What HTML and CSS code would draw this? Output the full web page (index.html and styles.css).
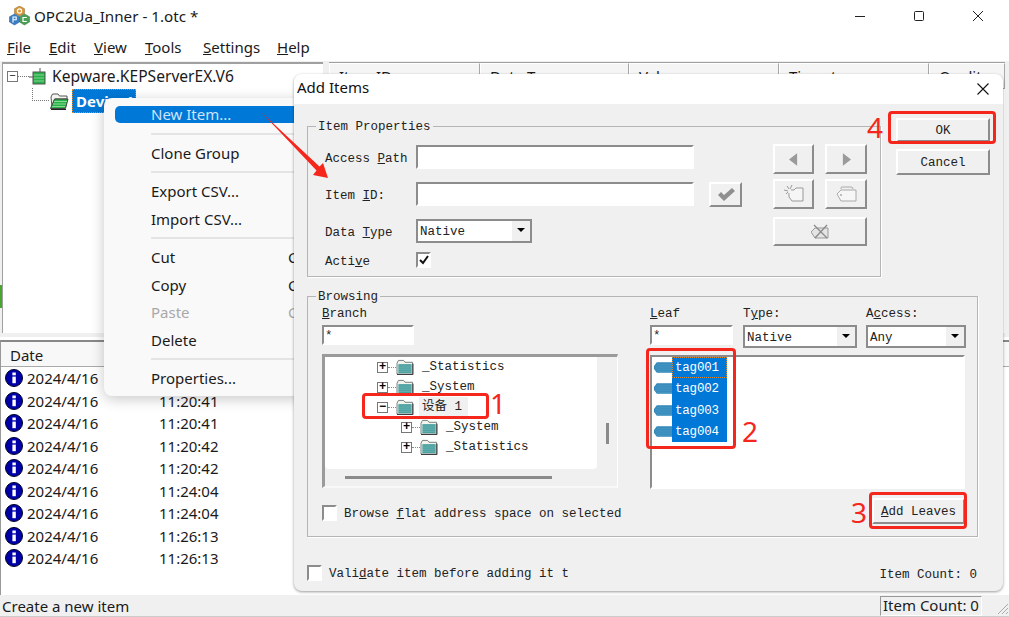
FILE: index.html
```html
<!DOCTYPE html>
<html lang="en">
<head>
<meta charset="utf-8">
<title>OPC2Ua_Inner - 1.otc *</title>
<link rel="stylesheet" href="styles.css">
</head>
<body>
<svg class="defs" width="0" height="0" aria-hidden="true">
  <symbol id="folder" viewBox="0 0 19 17">
    <path d="M1 4.5 L2.5 1.5 H8 L9.5 3.5 H17.5 V16 H1 Z" fill="#f4f4ee" stroke="#6f7a76"/>
    <rect x="2.5" y="5.5" width="14" height="9.5" fill="#3f9c9c"/>
    <path d="M2.5 7.5h14M2.5 9.5h14M2.5 11.5h14M2.5 13.5h14" stroke="#86bfbd" stroke-width=".7"/>
    <path d="M1 16.5H18V5" fill="none" stroke="#333"/>
  </symbol>
  <symbol id="folder-open" viewBox="0 0 20 18">
    <path d="M2 5 L3.5 2 H9 L10.5 4 H18 V7 H6 L3 15 Z" fill="#f4f4ee" stroke="#555"/>
    <path d="M5.5 7 H19 L16.5 16.5 H1.5 Z" fill="#26b246" stroke="#444"/>
    <path d="M5 9.5h13M4 12h13M3 14.5h13" stroke="#a3e4ab" stroke-width=".8"/>
    <path d="M2 17.5H17" stroke="#222"/>
  </symbol>
  <symbol id="info" viewBox="0 0 18 18">
    <circle cx="9" cy="9" r="8.5" fill="#0000a8" stroke="#000020"/>
    <rect x="7.4" y="7.6" width="3.4" height="6.6" fill="#fff"/>
    <rect x="7.4" y="3.5" width="3.4" height="2.8" fill="#fff"/>
  </symbol>
  <symbol id="tag" viewBox="0 0 19 13">
    <path d="M0 5 L3 1 H19 V12 H3 L0 8 Z" fill="#2f86b8"/>
    <path d="M3 3h16M1 5h18M1 7h18M1 9h18M3 11h16" stroke="#5aa5cc" stroke-width=".7"/>
  </symbol>
</svg>

<div class="window">
  <header class="titlebar">
    <svg class="logo" viewBox="0 0 21 20" width="21" height="20" aria-hidden="true">
      <path d="M10.5 0 L15.5 2.7 V7.5 L10.5 10 L5.5 7.5 V2.7 Z" fill="#d8963a" stroke="#8a6a30" stroke-width=".5"/>
      <circle cx="10.5" cy="5" r="2.1" fill="none" stroke="#fff" stroke-width="1.2"/>
      <path d="M5.5 8 L10.5 10.7 V16 L5.5 19 L.5 16 V10.7 Z" fill="#3a7fc4" stroke="#25558a" stroke-width=".5"/>
      <path d="M15.5 8 L20.5 10.7 V16 L15.5 19 L10.5 16 V10.7 Z" fill="#4aa156" stroke="#2e7038" stroke-width=".5"/>
      <path d="M4 16.5 V11 H7.2 V13.8 H4" fill="none" stroke="#fff" stroke-width="1.1"/>
      <path d="M17.8 11.5 H14 V15.5 H17.8" fill="none" stroke="#fff" stroke-width="1.2"/>
    </svg>
    <span class="title-text">OPC2Ua_Inner - 1.otc *</span>
    <div class="win-controls">
      <svg viewBox="0 0 12 12" width="12" height="12" aria-hidden="true"><path d="M1 6.5H11" stroke="#222" fill="none"/></svg>
      <svg viewBox="0 0 12 12" width="12" height="12" aria-hidden="true"><rect x="1.5" y="1.5" width="9" height="9" rx="1" stroke="#222" fill="none"/></svg>
      <svg viewBox="0 0 12 12" width="12" height="12" aria-hidden="true"><path d="M1 1L11 11M11 1L1 11" stroke="#222" fill="none"/></svg>
    </div>
  </header>

  <nav class="menubar">
    <span class="m-file"><u>F</u>ile</span>
    <span class="m-edit"><u>E</u>dit</span>
    <span class="m-view"><u>V</u>iew</span>
    <span class="m-tools"><u>T</u>ools</span>
    <span class="m-settings"><u>S</u>ettings</span>
    <span class="m-help"><u>H</u>elp</span>
  </nav>

  <div class="panes">
    <section class="server-tree">
      <div class="srv-row">
        <span class="exp-box">&minus;</span>
        <span class="dots"></span>
        <svg class="srv-icon" viewBox="0 0 17 17" width="17" height="17" aria-hidden="true">
          <rect x="4" y="4" width="12" height="12" fill="#28b048" stroke="#555"/>
          <path d="M5 7h10M5 10h10M5 13h10" stroke="#9fe0a8" stroke-width=".8"/>
          <path d="M0 9h4M11 0v4" stroke="#555"/>
        </svg>
        <span class="srv-name">Kepware.KEPServerEX.V6</span>
      </div>
      <div class="dev-row">
        <span class="elbow"></span>
        <svg class="dev-icon" aria-hidden="true"><use href="#folder-open"/></svg>
        <span class="dev-sel">Device1</span>
      </div>
    </section>
    <section class="items-list">
      <span class="col w-id">Item ID</span>
      <span class="col w-type">Data Type</span>
      <span class="col w-val">Value</span>
      <span class="col w-time">Timestamp</span>
      <span class="col w-q">Quality</span>
    </section>
  </div>

  <section class="log">
    <div class="log-head"><span>Date</span></div>
    <div class="log-row"><svg class="i" aria-hidden="true"><use href="#info"/></svg><span class="d">2024/4/16</span><span>11:20:41</span></div>
    <div class="log-row"><svg class="i" aria-hidden="true"><use href="#info"/></svg><span class="d">2024/4/16</span><span>11:20:41</span></div>
    <div class="log-row"><svg class="i" aria-hidden="true"><use href="#info"/></svg><span class="d">2024/4/16</span><span>11:20:41</span></div>
    <div class="log-row"><svg class="i" aria-hidden="true"><use href="#info"/></svg><span class="d">2024/4/16</span><span>11:20:42</span></div>
    <div class="log-row"><svg class="i" aria-hidden="true"><use href="#info"/></svg><span class="d">2024/4/16</span><span>11:20:42</span></div>
    <div class="log-row"><svg class="i" aria-hidden="true"><use href="#info"/></svg><span class="d">2024/4/16</span><span>11:24:04</span></div>
    <div class="log-row"><svg class="i" aria-hidden="true"><use href="#info"/></svg><span class="d">2024/4/16</span><span>11:24:04</span></div>
    <div class="log-row"><svg class="i" aria-hidden="true"><use href="#info"/></svg><span class="d">2024/4/16</span><span>11:26:13</span></div>
    <div class="log-row"><svg class="i" aria-hidden="true"><use href="#info"/></svg><span class="d">2024/4/16</span><span>11:26:13</span></div>
  </section>

  <footer class="statusbar">
    <span>Create a new item</span>
    <span class="status-count">Item Count: 0</span>
    <svg class="grip" viewBox="0 0 14 14" width="14" height="14" aria-hidden="true"><path d="M13 3L3 13M13 7L7 13M13 11L11 13" stroke="#aaa"/></svg>
  </footer>
</div>

<div class="ctx-menu">
  <div class="ctx-item ctx-hot">New Item...</div>
  <hr>
  <div class="ctx-item">Clone Group</div>
  <hr>
  <div class="ctx-item">Export CSV...</div>
  <div class="ctx-item">Import CSV...</div>
  <hr>
  <div class="ctx-item"><span>Cut</span><span class="sc">Ctrl+X</span></div>
  <div class="ctx-item"><span>Copy</span><span class="sc">Ctrl+C</span></div>
  <div class="ctx-item ctx-off"><span>Paste</span><span class="sc">Ctrl+V</span></div>
  <div class="ctx-item">Delete</div>
  <hr>
  <div class="ctx-item">Properties...</div>
</div>

<div class="dialog">
  <div class="dlg-title">
    <span>Add Items</span>
    <svg viewBox="0 0 12 12" width="12" height="12" aria-hidden="true"><path d="M.5 .5L11.5 11.5M11.5 .5L.5 11.5" stroke="#111" fill="none" stroke-width="1.1"/></svg>
  </div>
  <div class="dlg-body">
    <div class="top-row">
      <div class="group props">
        <span class="legend">Item Properties</span>
        <div class="prop-grid">
          <label>Access <u>P</u>ath</label><span class="input wide"></span><span></span><span></span>
          <label>Item <u>I</u>D:</label><span class="input wide"></span><span></span>
          <span class="btn tool">
            <svg viewBox="0 0 20 16" width="20" height="16" aria-hidden="true"><path d="M2 9l3-3 3 3 8-7 3 3-11 10z" fill="#8f8f8f"/></svg>
          </span>
          <label>Data <u>T</u>ype</label>
          <span class="select dt"><span>Native</span><i class="caret"></i></span><span></span><span></span>
          <label>Acti<u>v</u>e</label>
          <span class="check checked">
            <svg viewBox="0 0 10 10" width="10" height="10" aria-hidden="true"><path d="M1 5l3 3 5-7" fill="none" stroke="#111" stroke-width="2"/></svg>
          </span>
        </div>
        <div class="tool-grid">
          <span class="btn tool"><svg viewBox="0 0 10 14" width="9" height="13" aria-hidden="true"><path d="M9 0V14L0 7Z" fill="#9a9a9a"/></svg></span>
          <span class="btn tool"><svg viewBox="0 0 10 14" width="9" height="13" aria-hidden="true"><path d="M1 0V14L10 7Z" fill="#9a9a9a"/></svg></span>
          <span class="btn tool"><svg viewBox="0 0 20 18" width="20" height="18" aria-hidden="true"><path d="M7 5H10L12 3H19V16H8L5 12V8" fill="#f6f6f6" stroke="#999"/><path d="M3 1l2 3M8 0L6 4M0 5l4 1M2 9l2-2" stroke="#999"/></svg></span>
          <span class="btn tool"><svg viewBox="0 0 21 16" width="21" height="16" aria-hidden="true"><path d="M5 3V2Q5 1 6 1H15Q17 1 17 3" fill="none" stroke="#aaa"/><path d="M1 8L5 4H20V15H5Z" fill="#f6f6f6" stroke="#aaa"/><circle cx="5" cy="9" r="1" fill="#aaa"/></svg></span>
          <span class="btn tool span2"><svg viewBox="0 0 18 15" width="18" height="15" aria-hidden="true"><path d="M0 8L4 4H17V14H4Z" fill="#e4e4e4" stroke="#999"/><path d="M3 1L16 14M16 1L4 14" stroke="#8a8a8a" stroke-width="1.3"/></svg></span>
        </div>
      </div>
      <div class="side">
        <span class="btn push">OK</span>
        <span class="btn push">Cancel</span>
      </div>
    </div>

    <div class="group browsing">
      <span class="legend">Browsing</span>
      <div class="b-left">
        <div class="b-head">
          <label><u>B</u>ranch</label>
          <span class="input branch">*</span>
        </div>
        <div class="tree">
          <div class="tree-main">
            <div class="t-row"><span class="exp">+</span><span class="dash"></span><svg class="folder" aria-hidden="true"><use href="#folder"/></svg><span class="t-text">_Statistics</span></div>
            <div class="t-row"><span class="exp">+</span><span class="dash"></span><svg class="folder" aria-hidden="true"><use href="#folder"/></svg><span class="t-text">_System</span></div>
            <div class="t-row"><span class="exp">&minus;</span><span class="dash"></span><svg class="folder" aria-hidden="true"><use href="#folder"/></svg><span class="t-text t-cur">设备 1</span></div>
            <div class="t-row t-child"><span class="exp">+</span><span class="dash"></span><svg class="folder" aria-hidden="true"><use href="#folder"/></svg><span class="t-text">_System</span></div>
            <div class="t-row t-child"><span class="exp">+</span><span class="dash"></span><svg class="folder" aria-hidden="true"><use href="#folder"/></svg><span class="t-text">_Statistics</span></div>
          </div>
          <div class="v-track"><i></i></div>
          <div class="h-track"><i></i></div>
        </div>
        <div class="flat-row"><span class="check"></span><span>Browse <u>f</u>lat address space on selected</span></div>
      </div>
      <div class="b-right">
        <div class="r-head">
          <div class="r-c leaf"><label><u>L</u>eaf</label><span class="input">*</span></div>
          <div class="r-c type"><label>T<u>y</u>pe:</label><span class="select"><span>Native</span><i class="caret"></i></span></div>
          <div class="r-c access"><label>A<u>c</u>cess:</label><span class="select"><span>Any</span><i class="caret"></i></span></div>
        </div>
        <div class="leaf-list">
          <div class="leaf-row"><svg class="tagi" aria-hidden="true"><use href="#tag"/></svg><span class="leaf-sel first">tag001</span></div>
          <div class="leaf-row"><svg class="tagi" aria-hidden="true"><use href="#tag"/></svg><span class="leaf-sel">tag002</span></div>
          <div class="leaf-row"><svg class="tagi" aria-hidden="true"><use href="#tag"/></svg><span class="leaf-sel">tag003</span></div>
          <div class="leaf-row"><svg class="tagi" aria-hidden="true"><use href="#tag"/></svg><span class="leaf-sel">tag004</span></div>
        </div>
        <div class="add-row"><span class="btn add"><span><u>A</u>dd Leaves</span></span></div>
      </div>
    </div>

    <div class="dlg-foot">
      <span class="check"></span>
      <span class="val-text">Vali<u>d</u>ate item before adding it t</span>
      <span class="count">Item Count: 0</span>
    </div>
  </div>
</div>

<div class="marks">
  <svg class="arrow" viewBox="0 0 1009 617" width="1009" height="617" aria-hidden="true">
    <path d="M261 112 L319.5 166.5 L323 163 L328 178 L313 175 L316.5 170.5 Z" fill="#f5261c"/>
  </svg>
  <span class="box b1"></span><span class="num n1">1</span>
  <span class="box b2"></span><span class="num n2">2</span>
  <span class="box b3"></span><span class="num n3">3</span>
  <span class="box b4"></span><span class="num n4">4</span>
</div>
</body>
</html>
```
FILE: styles.css
```css
* { box-sizing: border-box; }
html, body { margin: 0; padding: 0; }
body {
  width: 1009px; height: 617px; overflow: hidden; position: relative;
  background: #fff; color: #1a1a1a;
  font-family: "Noto Sans", "Open Sans", sans-serif; font-size: 15px;
}
.defs { position: absolute; }

/* main window */
.window { display: flex; flex-direction: column; height: 617px; background: #fff; }
.titlebar { height: 38px; flex: none; display: flex; align-items: center; padding: 0 0 6px 9px; }
.logo { margin-right: 4px; }
.title-text { font-size: 15.2px; }
.win-controls { margin-left: auto; display: flex; gap: 47px; padding-right: 25px; }
.menubar { height: 23px; flex: none; display: flex; align-items: center; padding-left: 7px; padding-bottom: 5px; }
.menubar span { flex: none; }
.m-file { width: 42px; } .m-edit { width: 45px; } .m-view { width: 51px; }
.m-tools { width: 58px; } .m-settings { width: 74px; }

.panes {
  position: relative; height: 276px; flex: none; display: flex; background: #f0f0f0;
  padding: 1px 0 4px 2px;
}
.panes::before { content: ""; position: absolute; left: 0; top: 224px; width: 2px; height: 23px; background: #4aa52e; }
.server-tree {
  width: 321px; background: #fff; border-top: 2px solid #a0a0a0; border-left: 1px solid #a0a0a0;
  padding: 1px 0 0 4px;
}
.srv-row { display: flex; align-items: center; height: 22px; }
.srv-name { font-size: 15.6px; }
.exp-box {
  width: 11px; height: 11px; border: 1px solid #777; font: 11px/8px "Liberation Mono", monospace;
  text-align: center; background: #fff;
}
.dots { width: 11px; border-top: 1px dotted #777; }
.srv-icon { margin: 0 6px 0 0; }
.dev-row { display: flex; align-items: center; height: 25px; margin-top: 1px; padding-left: 25px; }
.elbow { width: 17px; height: 13px; border-left: 1px dotted #777; border-bottom: 1px dotted #777; margin-top: -12px; }
.dev-icon { width: 20px; height: 18px; }
.dev-sel {
  margin-left: 3px; width: 64px; height: 24px; background: #0078d7; color: #fff; font-weight: 700;
  padding-left: 3px; line-height: 22px; border: 1px dotted #e08a2c; overflow: hidden;
}
.items-list { flex: 1; margin-left: 6px; display: flex; background: #fff; border-top: 1px solid #a0a0a0; margin-right: 4px; align-items: flex-start; }
.col {
  height: 26px; line-height: 24px; padding-left: 9px; background: #f5f5f5; flex: none;
  border: 1px solid #a8a8a8; border-left-color: #fff; border-top-color: #fff;
}
.w-id { width: 151px; } .w-type { width: 149px; } .w-val { width: 150px; } .w-time { width: 150px; } .w-q { flex: 1; }

.log { flex: 1; min-height: 0; background: #fff; border-top: 2px solid #888; border-left: 1px solid #999; margin-top: 3px; }
.log-head { height: 25px; border-bottom: 1px solid #aaa; padding: 1px 0 0 9px; background: #f8f8f8; line-height: 24px; }
.log-row { display: flex; align-items: center; height: 22.5px; padding-left: 4px; }
.i { width: 18px; height: 18px; flex: none; }
.d { width: 132px; margin-left: 4px; flex: none; }

.statusbar {
  height: 22px; flex: none; background: #f0f0f0; display: flex; align-items: center;
  padding-left: 2px; border-bottom: 1px solid #ccc;
}
.status-count {
  margin-left: auto; width: 102px; height: 20px; border: 1px solid #999; border-right-color: #fff; border-bottom-color: #fff;
  padding-left: 2px; line-height: 17px; white-space: nowrap;
}
.grip { margin: 5px 0 0 13px; }

/* context menu */
.ctx-menu {
  position: absolute; left: 104px; top: 98px; width: 260px; height: 298px; padding: 8px 0 0 11px;
  background: #f9f9f9; border-radius: 8px; box-shadow: 0 3px 14px rgba(0,0,0,.22);
}
.ctx-item { height: 27.4px; line-height: 16px; padding: 0 0 0 36px; display: flex; align-items: center; }
.ctx-hot { height: 17px; background: #0078d7; color: #cfe4f7; border-radius: 5px; margin-bottom: 9.6px; padding-bottom: 2px; }
.ctx-off { color: #a8a8a8; }
.sc { position: absolute; left: 184px; }
.ctx-menu hr { height: 2px; border: 0; background: #e4e4e4; margin: 4.6px 0 4.6px 36px; }

/* dialog */
.dialog {
  position: absolute; left: 294px; top: 74px; width: 709px; height: 517px;
  border-radius: 8px; overflow: hidden; background: #f0f0f0; box-shadow: 0 1px 3px rgba(0,0,0,.4);
  font-family: "Liberation Mono", "Noto Sans CJK SC", monospace; font-size: 12.5px; color: #222;
}
.dlg-title {
  height: 30px; background: #fff; display: flex; align-items: center; justify-content: space-between;
  padding: 0 14px 4px 3px; font-family: "Noto Sans", sans-serif; font-size: 15px; color: #111;
}
.dlg-title svg { margin-top: 3px; }
.dlg-body { padding: 14px 0 0 13px; }
.top-row { display: flex; align-items: flex-start; }
.group { position: relative; border: 1px solid #b5b5b5; box-shadow: 1px 1px 0 #fff; }
.legend { position: absolute; left: 8px; top: -7px; background: #f0f0f0; padding: 0 2px; line-height: 15px; }
.props { width: 574px; height: 151px; margin-top: 8px; display: flex; padding: 18px 0 0 17px; }
.prop-grid {
  display: grid; width: 417px; height: 123px; flex: none;
  grid-template-columns: 91px 278px 15px 33px; grid-template-rows: 24px 24px 24px 16px; row-gap: 13px; align-items: center;
}
.prop-grid label { padding-top: 3px; }
.prop-grid > :nth-last-child(1), .prop-grid > :nth-last-child(2) { margin-top: -8px; }
.input {
  display: block; height: 100%; background: #fff; border: 2px solid; border-color: #8c8c8c #fff #fff #8c8c8c;
  padding-left: 1px; line-height: 18px;
}
.wide { height: 24px; }
.select {
  display: flex; align-items: center; justify-content: space-between; height: 24px; background: #fff;
  border: 2px solid; border-color: #8c8c8c; padding-left: 2px;
}
.select > span { padding-top: 2px; }
.dt { width: 116px; }
.caret {
  width: 19px; align-self: stretch; background: #f0f0f0; position: relative; border-left: 1px solid #fff;
}
.caret::after {
  content: ""; position: absolute; left: 5px; top: 7px; border: 4.5px solid transparent; border-top-color: #000; border-bottom: 0;
}
.check {
  display: flex; align-items: center; justify-content: center; width: 15px; height: 16px; flex: none; background: #fff;
  border: 2px solid; border-color: #8c8c8c #fff #fff #8c8c8c;
}
.btn {
  display: flex; align-items: center; justify-content: center; background: #f0f0f0;
  border: 2px solid; border-color: #fff #8c8c8c #8c8c8c #fff;
}
.tool { height: 100%; }
.prop-grid .tool { height: 25px; }
.tool-grid {
  display: grid; margin: -1px 0 0 31px; width: 94px; height: 102px; flex: none;
  grid-template-columns: 41px 42px; grid-template-rows: 30px 30px 29px; column-gap: 11px; row-gap: 5px;
}
.span2 { grid-column: span 2; margin-top: 3px; }
.side { margin-left: 15px; width: 94px; display: flex; flex-direction: column; gap: 7px; }
.push { height: 24px; padding-top: 2px; }
.push + .push { height: 26px; }

.browsing { width: 671px; height: 241px; margin-top: 19px; display: flex; padding: 9px 0 0 14px; }
.b-left { width: 296px; flex: none; }
.b-head { height: 48px; }
.b-head label, .r-c label { display: block; height: 19px; line-height: 17px; }
.branch { width: 92px; height: 20px; }
.tree {
  height: 134px; display: grid; grid-template-columns: 272px 20px; grid-template-rows: 112px 19px;
  border: 3px solid #9a9a9a; border-bottom: 2px solid #f8f8f8; border-right: 1px solid #fff; background: #f0f0f0; overflow: hidden;
}
.tree-main { background: #fff; border-radius: 0 0 4px 4px; }
.t-row { display: flex; align-items: center; height: 20px; padding-left: 52px; line-height: 22px; }
.t-child { padding-left: 76px; }
.exp {
  width: 11px; height: 11px; flex: none; border: 1px solid #777; background: #fff;
  font: bold 12px/8px "Liberation Mono", monospace; text-align: center; color: #000;
}
.dash { width: 8px; flex: none; border-top: 1px dotted #888; }
.folder { width: 18px; height: 16px; flex: none; }
.t-text { margin-left: 8px; }
.t-cur { background: #f0f0f0; width: 49px; margin-left: 5px; padding-left: 3px; line-height: 20px; }
.v-track { display: flex; justify-content: center; padding-top: 66px; }
.v-track i { width: 3px; height: 21px; background: #8a8a8a; }
.h-track { grid-column: span 2; padding: 7px 0 0 20px; }
.h-track i { display: block; width: 207px; height: 3px; background: #8a8a8a; }
.flat-row { display: flex; align-items: center; gap: 7px; margin-top: 16px; white-space: nowrap; line-height: 16px; }
.flat-row > span + span { padding-top: 2px; }
.b-right { width: 316px; margin-left: 32px; flex: none; }
.r-head { display: flex; height: 49px; }
.r-c { flex: none; }
.leaf { width: 83px; }
.leaf .input { height: 20px; }
.type { width: 114px; margin-left: 10px; }
.access { width: 100px; margin-left: 9px; }
.r-c .select { height: 23px; }
.leaf-list {
  width: 315px; height: 134px; background: #fff; border: 2px solid; border-color: #8c8c8c #fff #fff #8c8c8c; padding: 0 0 0 2px;
}
.leaf-row { display: flex; align-items: center; height: 21.3px; color: #fff; }
.tagi { width: 18px; height: 13px; flex: none; }
.leaf-sel { width: 55px; height: 21.3px; line-height: 23px; background: #0078d7; padding-left: 3px; letter-spacing: -.2px; }
.first { outline: 1px dotted #e08a2c; outline-offset: -1px; }
.add-row { display: flex; justify-content: flex-end; margin: 9px 1px 0 0; }
.add { width: 93px; height: 26px; padding-top: 2px; }

.dlg-foot { display: flex; align-items: center; margin-top: 28px; height: 16px; padding-right: 26px; white-space: nowrap; }
.val-text { margin-left: 7px; padding-top: 1px; }
.count { margin-left: auto; margin-top: 3px; }

/* annotations drawn on top of the screenshot */
.marks { position: absolute; inset: 0; pointer-events: none; }
.arrow { position: absolute; left: 0; top: 0; }
.box { position: absolute; border: 3px solid #f5261c; border-radius: 4px; }
.b1 { left: 362px; top: 393px; width: 127px; height: 26px; }
.b2 { left: 646px; top: 348px; width: 90px; height: 101px; }
.b3 { left: 869px; top: 492px; width: 98px; height: 37px; }
.b4 { left: 888px; top: 111px; width: 108px; height: 33px; }
.num { position: absolute; color: #f5261c; font-family: "Noto Sans", sans-serif; font-size: 28px; line-height: 30px; font-weight: 400; }
.n1 { left: 490px; top: 388px; }
.n2 { left: 742px; top: 416px; }
.n3 { left: 851px; top: 497px; }
.n4 { left: 867px; top: 112px; }
```
